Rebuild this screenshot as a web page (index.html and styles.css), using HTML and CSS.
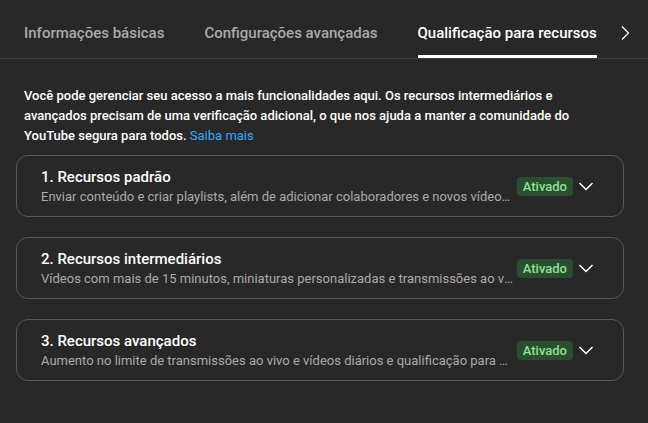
FILE: index.html
```html
<!DOCTYPE html>
<html lang="pt-BR">
<head>
  <meta charset="UTF-8">
  <meta name="viewport" content="width=device-width, initial-scale=1.0">
  <title>Qualificação para recursos</title>
  <link rel="stylesheet" href="styles.css">
</head>
<body>
  <div class="tabs">
    <div class="tab">Informações básicas</div>
    <div class="tab">Configurações avançadas</div>
    <div class="tab active">Qualificação para recursos</div>
    <div class="tab-next">
      <svg width="24" height="24" viewBox="0 0 24 24"><path d="M9 5.5l6.5 6.5L9 18.5" fill="none" stroke="#fff" stroke-width="1.2"/></svg>
    </div>
  </div>

  <div class="content">
    <p class="intro">Você pode gerenciar seu acesso a mais funcionalidades aqui. Os recursos intermediários e avançados precisam de uma verificação adicional, o que nos ajuda a manter a comunidade do YouTube segura para todos. <a href="#">Saiba mais</a></p>

    <div class="card">
      <div class="card-text">
        <div class="card-title">1. Recursos padrão</div>
        <div class="card-desc">Enviar conteúdo e criar playlists, além de adicionar colaboradores e novos vídeos a playlists colaborativas</div>
      </div>
      <span class="badge">Ativado</span>
      <div class="expand">
        <svg width="24" height="24" viewBox="0 0 24 24"><path d="M5.5 9l6.5 6.5 6.5-6.5" fill="none" stroke="#fff" stroke-width="1.5"/></svg>
      </div>
    </div>

    <div class="card">
      <div class="card-text">
        <div class="card-title">2. Recursos intermediários</div>
        <div class="card-desc">Vídeos com mais de 15 minutos, miniaturas personalizadas e transmissões ao vivo</div>
      </div>
      <span class="badge">Ativado</span>
      <div class="expand">
        <svg width="24" height="24" viewBox="0 0 24 24"><path d="M5.5 9l6.5 6.5 6.5-6.5" fill="none" stroke="#fff" stroke-width="1.5"/></svg>
      </div>
    </div>

    <div class="card">
      <div class="card-text">
        <div class="card-title">3. Recursos avançados</div>
        <div class="card-desc">Aumento no limite de transmissões ao vivo e vídeos diários e qualificação para o Programa de Parcerias</div>
      </div>
      <span class="badge">Ativado</span>
      <div class="expand">
        <svg width="24" height="24" viewBox="0 0 24 24"><path d="M5.5 9l6.5 6.5 6.5-6.5" fill="none" stroke="#fff" stroke-width="1.5"/></svg>
      </div>
    </div>
  </div>
</body>
</html>
```

FILE: styles.css
```css
body {
  margin: 0;
  background-color: #282828;
  color: #fff;
  font-family: Roboto, "Noto Sans", Arial, sans-serif;
}
.tabs {
  display: flex;
  align-items: stretch;
  height: 58px;
  padding-left: 24px;
  border-bottom: 1px solid #3e3e3e;
  gap: 40px;
}
.tab {
  display: flex;
  align-items: center;
  padding-top: 11px;
  font-size: 15px;
  font-weight: 500;
  color: #aaa;
  border-bottom: 3px solid transparent;
  box-sizing: border-box;
}
.tab.active {
  color: #fff;
  border-bottom-color: #fff;
}
.tab-next {
  display: flex;
  align-items: center;
  margin-left: -24px;
  padding-top: 8px;
}
.content {
  padding: 27px 24px 0 16px;
}
.intro {
  margin: 0 0 9px 8px;
  max-width: 560px;
  font-size: 13px;
  line-height: 20px;
  font-weight: 500;
}
.intro a {
  color: #3ea6ff;
  text-decoration: none;
  font-weight: 400;
}
.card {
  display: flex;
  align-items: center;
  height: 60px;
  margin-bottom: 20px;
  padding: 0 25px 0 24px;
  border: 1px solid #5a5a5a;
  border-radius: 12px;
}
.card-text {
  flex: 1;
  min-width: 0;
  padding-top: 2px;
}
.card-title {
  font-size: 15px;
  font-weight: 500;
  line-height: 20px;
}
.card-desc {
  font-size: 13px;
  line-height: 20px;
  color: #aaa;
  white-space: nowrap;
  overflow: hidden;
  text-overflow: ellipsis;
}
.badge {
  margin-left: 2px;
  padding: 0 6px;
  height: 19px;
  line-height: 19px;
  font-size: 13px;
  font-weight: 500;
  color: #8ee09a;
  background-color: #2b4e30;
  border-radius: 4px;
}
.expand {
  display: flex;
  margin-left: 1px;
}
```
